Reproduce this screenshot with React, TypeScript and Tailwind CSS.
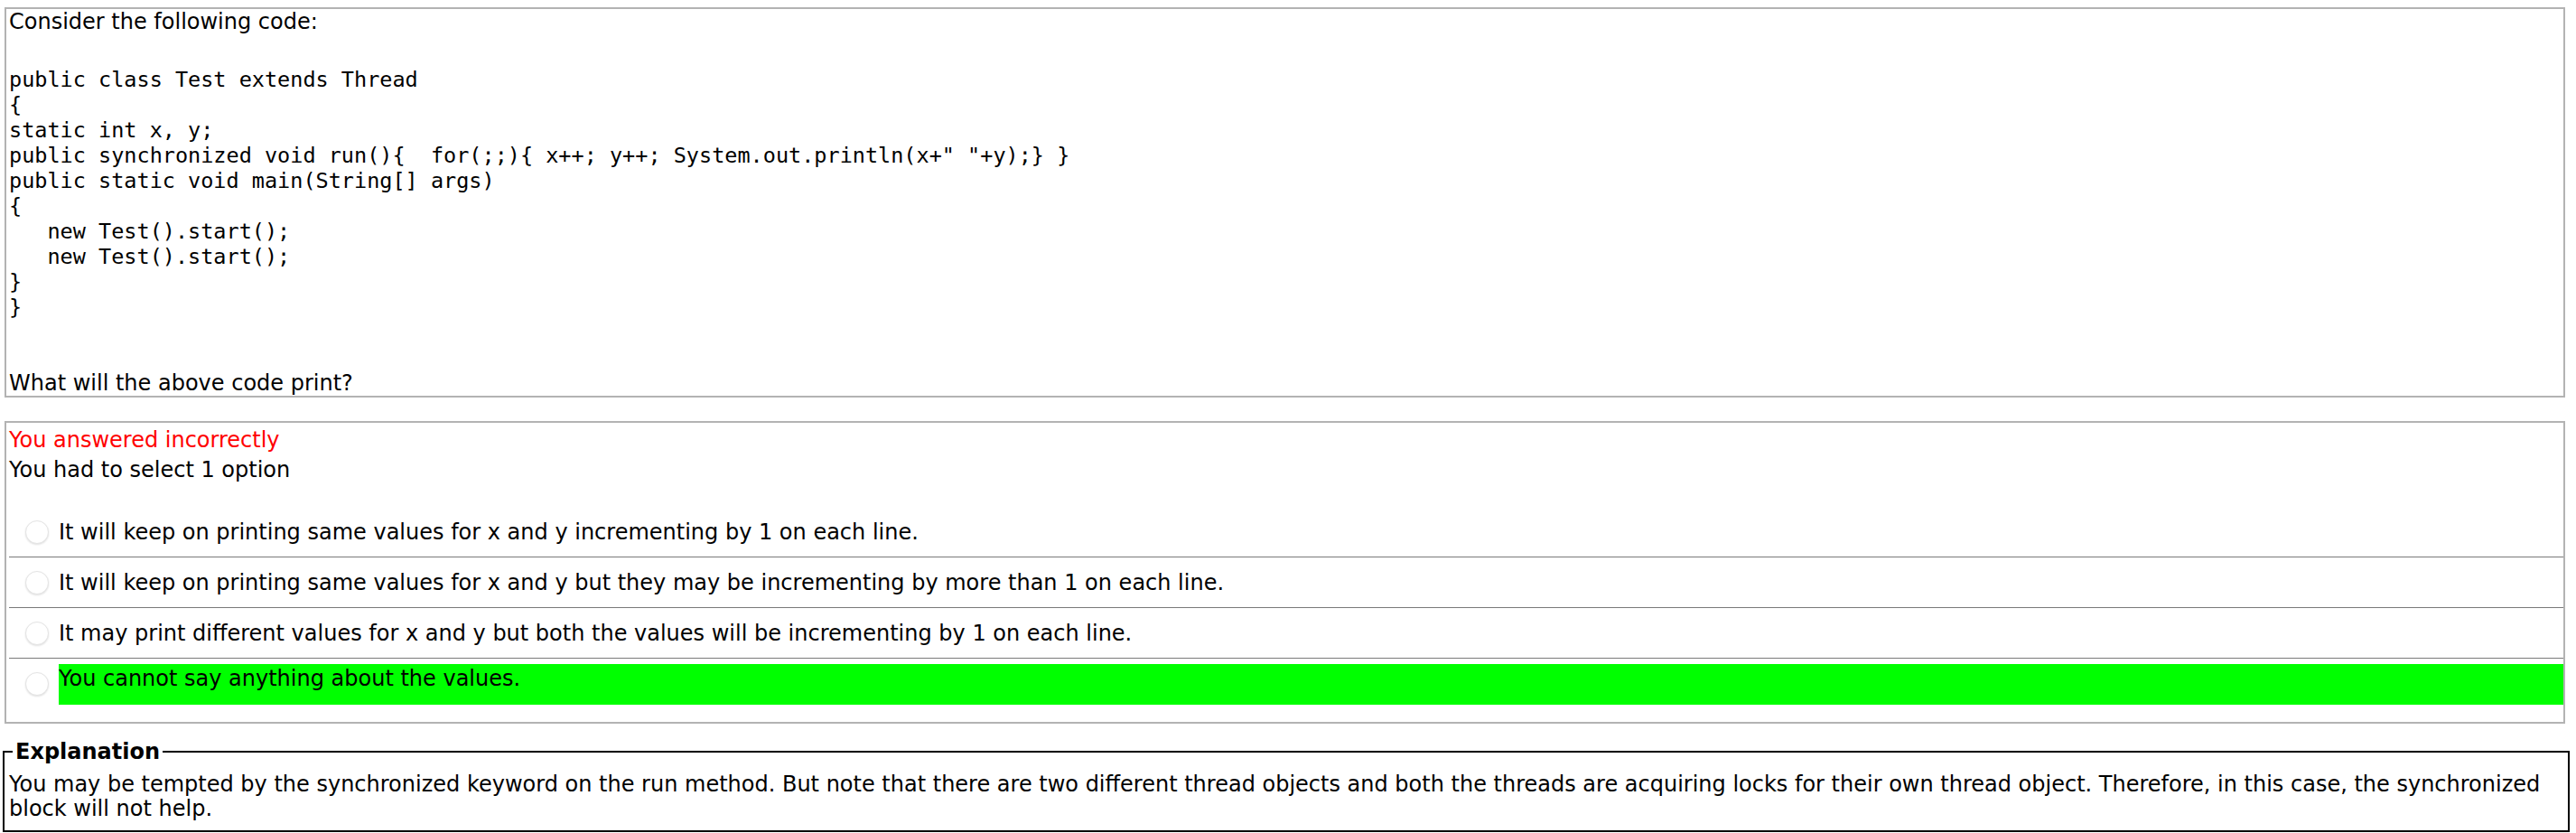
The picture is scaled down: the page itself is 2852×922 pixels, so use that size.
import React from "react";

const sans = { fontFamily: '"DejaVu Sans", Verdana, sans-serif' };

const codeLines = [
  "public class Test extends Thread",
  "{",
  "static int x, y;",
  'public synchronized void run(){  for(;;){ x++; y++; System.out.println(x+" "+y);} }',
  "public static void main(String[] args)",
  "{",
  "   new Test().start();",
  "   new Test().start();",
  "}",
  "}",
];

const options = [
  "It will keep on printing same values for x and y incrementing by 1 on each line.",
  "It will keep on printing same values for x and y but they may be incrementing by more than 1 on each line.",
  "It may print different values for x and y but both the values will be incrementing by 1 on each line.",
  "You cannot say anything about the values.",
];

function Radio() {
  return (
    <span className="block w-[26px] h-[26px] shrink-0 rounded-full bg-white border border-[#e4e4e4] shadow-[0_1px_2px_rgba(0,0,0,0.12)]" />
  );
}

export default function App() {
  return (
    <div className="min-h-screen w-full bg-white text-black pt-[8px] text-[24px]" style={sans}>
      {/* Question */}
      <div className="ml-[5px] mr-[12px] border-2 border-[#b3b3b3]">
        <p className="pl-[3px] leading-[28px]">Consider the following code:</p>
        <pre className="mt-[36px] pl-[3px] text-[23.5px] leading-[28px] font-['DejaVu_Sans_Mono',monospace] whitespace-pre">
          {codeLines.join("\n")}
        </pre>
        <p className="mt-[56px] pl-[3px] leading-[28px]">What will the above code print?</p>
      </div>

      {/* Answer */}
      <div className="ml-[5px] mr-[12px] mt-[26px] border-2 border-[#b3b3b3] pt-[5px] pb-[14px]">
        <p className="pl-[3px] leading-[28px] text-[#ff0000]">You answered incorrectly</p>
        <p className="pl-[3px] mt-[5px] leading-[28px]">You had to select 1 option</p>
        <div className="mt-[27px] ml-[3px]">
          {options.map((opt, i) => {
            const correct = i === options.length - 1;
            return (
              <div
                key={i}
                className={
                  correct
                    ? "flex items-center h-[56px] py-[5px]"
                    : "flex items-center h-[56px] border-b border-[#7a7a7a]"
                }
              >
                <span className="ml-[18px] mr-[11px]">
                  <Radio />
                </span>
                <div
                  className={
                    correct
                      ? "flex-1 h-[45px] bg-[#00ff00] leading-[28px] flex items-start pt-[2px]"
                      : "flex-1 leading-[28px]"
                  }
                >
                  {opt}
                </div>
              </div>
            );
          })}
        </div>
      </div>

      {/* Explanation */}
      <fieldset className="ml-[3px] mr-[7px] mt-[17px] border-2 border-black px-[5px] pb-[10px]">
        <legend className="ml-[4px] px-[3px] font-bold leading-[28px]">Explanation</legend>
        <p className="leading-[27px] pt-[9px]">
          You may be tempted by the synchronized keyword on the run method. But note that there are two different thread
          objects and both the threads are acquiring locks for their own thread object. Therefore, in this case, the
          synchronized block will not help.
        </p>
      </fieldset>
    </div>
  );
}
